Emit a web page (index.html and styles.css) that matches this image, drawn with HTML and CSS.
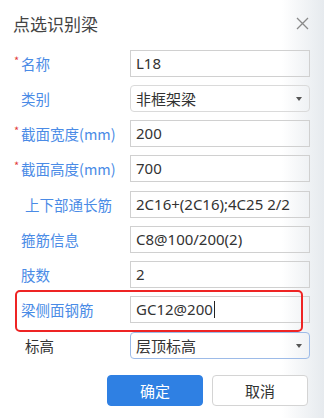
FILE: index.html
```html
<!DOCTYPE html>
<html>
<head>
  <title>点选识别梁</title>
  <link rel="stylesheet" href="styles.css">
</head>
<body>
  <div class="dialog">
    <div class="header">
      <span class="title">点选识别梁</span>
      <svg class="close" width="13" height="13" viewBox="0 0 13 13">
        <path d="M1 1 L12 12 M12 1 L1 12" stroke="#8a8a8a" stroke-width="1.3" fill="none"/>
      </svg>
    </div>

    <form class="form">
      <div class="row">
        <label class="label"><span class="req">*</span>名称</label>
        <div class="field">L18</div>
      </div>
      <div class="row">
        <label class="label">类别</label>
        <div class="field select">非框架梁<span class="arrow"></span></div>
      </div>
      <div class="row">
        <label class="label"><span class="req">*</span>截面宽度(mm)</label>
        <div class="field">200</div>
      </div>
      <div class="row">
        <label class="label"><span class="req">*</span>截面高度(mm)</label>
        <div class="field">700</div>
      </div>
      <div class="row">
        <label class="label indent">上下部通长筋</label>
        <div class="field">2C16+(2C16);4C25 2/2</div>
      </div>
      <div class="row">
        <label class="label">箍筋信息</label>
        <div class="field">C8@100/200(2)</div>
      </div>
      <div class="row">
        <label class="label">肢数</label>
        <div class="field">2</div>
      </div>
      <div class="row marked">
        <label class="label">梁侧面钢筋</label>
        <div class="field">GC12@200<span class="caret"></span></div>
        <div class="highlight"></div>
      </div>
      <div class="row">
        <label class="label indent dark">标高</label>
        <div class="field select focus">层顶标高<span class="arrow"></span></div>
      </div>
    </form>

    <div class="buttons">
      <button type="button" class="btn primary">确定</button>
      <button type="button" class="btn">取消</button>
    </div>
  </div>
</body>
</html>
```

FILE: styles.css
```css
body {
  margin: 0;
  width: 324px;
  height: 418px;
  font-family: "Noto Sans", "Noto Sans CJK SC", sans-serif;
  background: linear-gradient(to right, #ffffff 0%, #ffffff 87%, #e6eaee 100%);
  overflow: hidden;
}

.header {
  height: 46px;
  display: flex;
  align-items: center;
  justify-content: space-between;
  padding: 0 15px 0 13px;
}

.title {
  font-family: "Noto Sans CJK SC", sans-serif;
  font-size: 17px;
  color: #444;
}

.form {
  margin-top: 3.5px;
}

.row {
  position: relative;
  display: flex;
  align-items: center;
  height: 27px;
  margin-bottom: 8.25px;
}

.label {
  width: 130px;
  box-sizing: border-box;
  padding-left: 21px;
  font-family: "Noto Sans CJK SC", sans-serif;
  font-size: 14.5px;
  color: #4a8be6;
  position: relative;
}

.label.indent {
  padding-left: 25px;
}

.label.dark {
  color: #333;
}

.req {
  position: absolute;
  left: 14px;
  top: -1px;
  color: #e23b3b;
  font-size: 11px;
}

.field {
  width: 180px;
  height: 27px;
  box-sizing: border-box;
  border: 1px solid #d0d0d0;
  padding-left: 5px;
  font-size: 15px;
  line-height: 25px;
  color: #333;
  font-family: "Noto Sans", "Noto Sans CJK SC", sans-serif;
  position: relative;
  white-space: nowrap;
  overflow: hidden;
}

.field.select {
  border-radius: 4px;
  border-color: #dadada;
  font-family: "Noto Sans CJK SC", sans-serif;
}

.field.focus {
  border-color: #9dbbe8;
}

.arrow {
  position: absolute;
  right: 7px;
  top: 11px;
  border-left: 3px solid transparent;
  border-right: 3px solid transparent;
  border-top: 4px solid #555;
}

.caret {
  display: inline-block;
  width: 1px;
  height: 17px;
  background: #222;
  vertical-align: -3px;
  margin-left: 1px;
}

.highlight {
  position: absolute;
  left: 15px;
  right: 21px;
  top: -6px;
  height: 42px;
  border: 2px solid #ee2424;
  border-radius: 5px;
  box-sizing: border-box;
  pointer-events: none;
}

.buttons {
  display: flex;
  justify-content: flex-end;
  gap: 9px;
  padding-right: 16px;
  margin-top: 16.5px;
}

.btn {
  width: 96px;
  height: 31px;
  border: 1px solid #d4d4d4;
  border-radius: 4px;
  background: #fff;
  color: #333;
  font-family: "Noto Sans CJK SC", sans-serif;
  font-size: 15px;
  padding: 0;
}

.btn.primary {
  background: #2f80e3;
  border-color: #2f80e3;
  color: #fff;
}
```
